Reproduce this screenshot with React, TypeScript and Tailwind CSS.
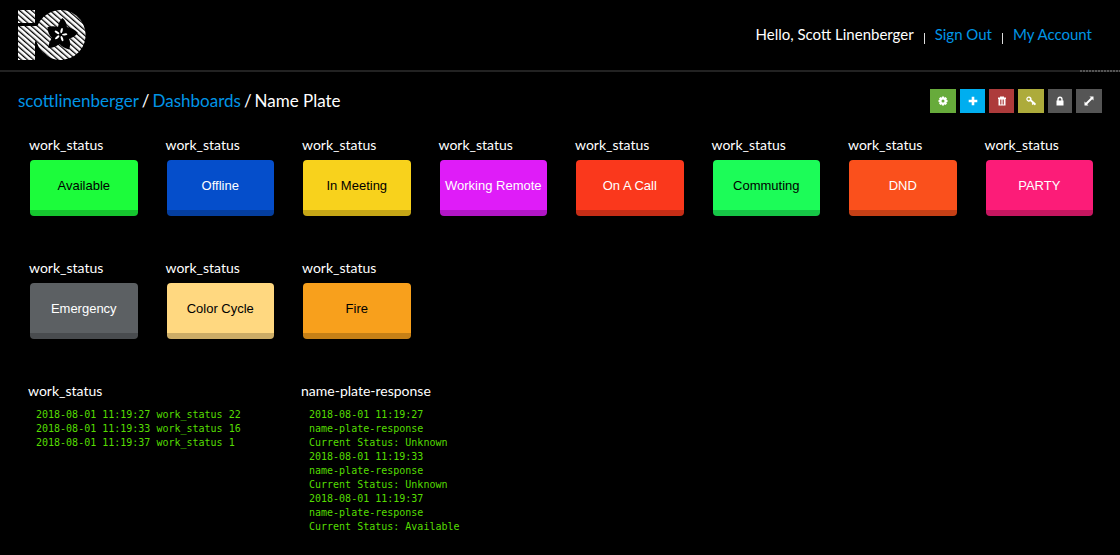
import React from "react";

type Status = { label: string; face: string; text: string };

const statuses: Status[] = [
  { label: "Available", face: "bg-[#1cfc3b] border-[#16c62f]", text: "text-black" },
  { label: "Offline", face: "bg-[#054ecb] border-[#043e9f]", text: "text-white" },
  { label: "In Meeting", face: "bg-[#f8d21c] border-[#c6a716]", text: "text-black" },
  { label: "Working Remote", face: "bg-[#df1cf8] border-[#b216c6]", text: "text-white" },
  { label: "On A Call", face: "bg-[#fa381c] border-[#c62d16]", text: "text-white" },
  { label: "Commuting", face: "bg-[#1cfc58] border-[#16c646]", text: "text-black" },
  { label: "DND", face: "bg-[#fa501c] border-[#c64016]", text: "text-white" },
  { label: "PARTY", face: "bg-[#fc1c78] border-[#c61660]", text: "text-white" },
  { label: "Emergency", face: "bg-[#5c6063] border-[#494c4f]", text: "text-white" },
  { label: "Color Cycle", face: "bg-[#ffd880] border-[#ccac66]", text: "text-black" },
  { label: "Fire", face: "bg-[#f8a01c] border-[#c68016]", text: "text-black" },
];

const workLog = [
  ["2018-08-01 11:19:27", "work_status", "22"],
  ["2018-08-01 11:19:33", "work_status", "16"],
  ["2018-08-01 11:19:37", "work_status", "1"],
];

const responseLog = [
  ["2018-08-01 11:19:27", "Unknown"],
  ["2018-08-01 11:19:33", "Unknown"],
  ["2018-08-01 11:19:37", "Available"],
];

function Logo() {
  return (
    <svg width="68" height="50" viewBox="0 0 68 50" aria-hidden="true">
      <defs>
        <pattern id="stripes" width="4" height="4" patternUnits="userSpaceOnUse" patternTransform="rotate(41)">
          <rect width="4" height="2.7" fill="#fff" />
        </pattern>
      </defs>
      <path
        d="M0 0H17V13H0ZM0 16H19.300A25 25 0 1 1 18.600 32L17 31V50H0Z"
        fill="url(#stripes)"
      />
      <path
        d="M44.500 8C47 10 48.500 13 49 17C53 17.500 57 19.500 60 23C57 26.500 53.500 28 51 28.500C52.500 32 52.500 36 51 39.500C47 38.500 43.500 36.500 41.500 34C38 36.500 34.500 38 30.500 38C30.500 34 32 30.500 34 28C31 25 29.500 21.500 29.500 17C33 16 37 16 40 17C40.500 13 42 10 44.500 8Z"
        fill="#000"
      />
      <g fill="#fff">
        {[15, 87, 159, 231, 303].map((a) => (
          <ellipse key={a} cx="42.500" cy="20.500" rx="1.100" ry="2.700" transform={`rotate(${a} 42.500 24.700)`} />
        ))}
      </g>
    </svg>
  );
}

const tools = [
  {
    name: "Settings",
    style: "w-[26px] bg-[#67ab3b]",
    icon: (
      <path
        fillRule="evenodd"
        d="M4 .5H6L6.300 1.700L7.500 1L9 2.500L8.300 3.700L9.500 4V6L8.300 6.300L9 7.500L7.500 9L6.300 8.300L6 9.500H4L3.700 8.300L2.500 9L1 7.500L1.700 6.300L.5 6V4L1.700 3.700L1 2.500L2.500 1L3.700 1.700ZM5 3.500A1.500 1.500 0 1 0 5 6.500A1.500 1.500 0 1 0 5 3.500Z"
      />
    ),
  },
  { name: "Add block", style: "w-[25px] bg-[#00aeef]", icon: <path d="M3.700 .7H6.300V3.700H9.300V6.300H6.300V9.300H3.700V6.300H.7V3.700H3.700Z" /> },
  {
    name: "Delete",
    style: "w-[25px] bg-[#ad3b3b]",
    icon: (
      <path
        fillRule="evenodd"
        d="M3 .5H7V1.500H9V3H8.500V9.500H1.500V3H1V1.500H3ZM3 3.500V8.500H3.800V3.500ZM4.600 3.500V8.500H5.400V3.500ZM6.200 3.500V8.500H7V3.500Z"
      />
    ),
  },
  {
    name: "Keys",
    style: "w-[26px] bg-[#adab3b]",
    icon: (
      <path
        fillRule="evenodd"
        d="M3 .5A2.600 2.600 0 0 1 5.500 3.800L9.800 7.500L9.500 9L8.500 9.200L7.600 8.300L6.600 9L5.700 8.100L6.300 7.100L4.300 5.300A2.600 2.600 0 1 1 3 .5ZM2.700 1.800A1.200 1.200 0 1 0 2.700 4.200A1.200 1.200 0 1 0 2.700 1.800Z"
      />
    ),
  },
  {
    name: "Privacy",
    style: "w-6 bg-[#555]",
    icon: (
      <path fillRule="evenodd" d="M1.500 4.500H2.300V3.500A2.700 2.900 0 0 1 7.700 3.500V4.500H8.500V9.500H1.500ZM3.700 4.500H6.300V3.500A1.300 1.500 0 0 0 3.700 3.500Z" />
    ),
  },
  {
    name: "Full screen",
    style: "w-[26px] bg-[#555]",
    icon: <path d="M5.500 .5H9.500V4.500L8.200 3.200L3.200 8.200L4.500 9.500H.5V5.500L1.800 6.800L6.800 1.800Z" />,
  },
];

export default function App() {
  return (
    <div className="min-h-screen bg-black font-['Lato','Noto_Sans',sans-serif] text-white">
      <header>
        <div className="flex h-[70px] items-start justify-between pt-[10px] pr-7 pl-[18px]">
          <a href="#home" aria-label="Home">
            <Logo />
          </a>
          <nav className="flex items-center pt-3 text-[15px] leading-6">
            <span>Hello, Scott Linenberger</span>
            <span className="mx-[10px] mt-2 h-[11px] w-px bg-[#ddd]" />
            <a href="#signout" className="text-[#0095e6]">Sign Out</a>
            <span className="mx-[10px] mt-2 h-[11px] w-px bg-[#ddd]" />
            <a href="#account" className="text-[#0095e6]">My Account</a>
          </nav>
        </div>
        <div className="flex h-0.5">
          <div className="flex-1 bg-[#222]" />
          <div className="w-10 bg-[repeating-linear-gradient(90deg,#555_0_2px,#222_2px_3px)]" />
        </div>
      </header>

      <div className="flex items-start justify-between pt-[17px] pr-[18px] pl-[18px]">
        <h1 className="flex gap-[3px] text-[17px] leading-6">
          <a href="#user" className="text-[#0095e6]">scottlinenberger</a>
          <span>/</span>
          <a href="#dashboards" className="text-[#0095e6]">Dashboards</a>
          <span>/</span>
          <span>Name Plate</span>
        </h1>
        <div className="flex gap-1">
          {tools.map((t) => (
            <button key={t.name} type="button" aria-label={t.name} className={`flex h-6 items-center justify-center ${t.style}`}>
              <svg width="10" height="10" viewBox="0 0 10 10" fill="#fff" aria-hidden="true">
                {t.icon}
              </svg>
            </button>
          ))}
        </div>
      </div>

      <main className="pt-[22px] pr-[10px] pb-4 pl-[18px]">
        <section className="grid grid-cols-8">
          {statuses.map((s) => (
            <div key={s.label} className="h-[123px] pr-[17px] pl-[11px]">
              <h2 className="text-sm leading-5">work_status</h2>
              <button
                type="button"
                className={`mt-[5px] ml-px flex h-14 w-[calc(100%-1px)] items-center justify-center rounded border-b-[6px] pt-0.5 font-['Liberation_Sans',sans-serif] text-[13px] leading-4 whitespace-nowrap ${s.face} ${s.text}`}
              >
                {s.label}
              </button>
            </div>
          ))}
        </section>

        <section className="grid grid-cols-4 font-['DejaVu_Sans_Mono',monospace] text-[10px] leading-[14px] text-[#55dd00]">
          <div className="pl-[10px]">
            <h2 className="mb-[7px] font-['Lato','Noto_Sans',sans-serif] text-sm leading-5 text-white">work_status</h2>
            <table className="ml-2">
              <tbody>
                {workLog.map((row) => (
                  <tr key={row[0]}>
                    {row.map((cell) => (
                      <td key={cell} className="p-0 pr-1.5">{cell}</td>
                    ))}
                  </tr>
                ))}
              </tbody>
            </table>
          </div>
          <div className="pl-[10px]">
            <h2 className="mb-[7px] font-['Lato','Noto_Sans',sans-serif] text-sm leading-5 text-white">name-plate-response</h2>
            <ul className="ml-2">
              {responseLog.map(([time, status]) => (
                <li key={time}>
                  <p>{time}</p>
                  <p>name-plate-response</p>
                  <p>Current Status: {status}</p>
                </li>
              ))}
            </ul>
          </div>
        </section>
      </main>
    </div>
  );
}
